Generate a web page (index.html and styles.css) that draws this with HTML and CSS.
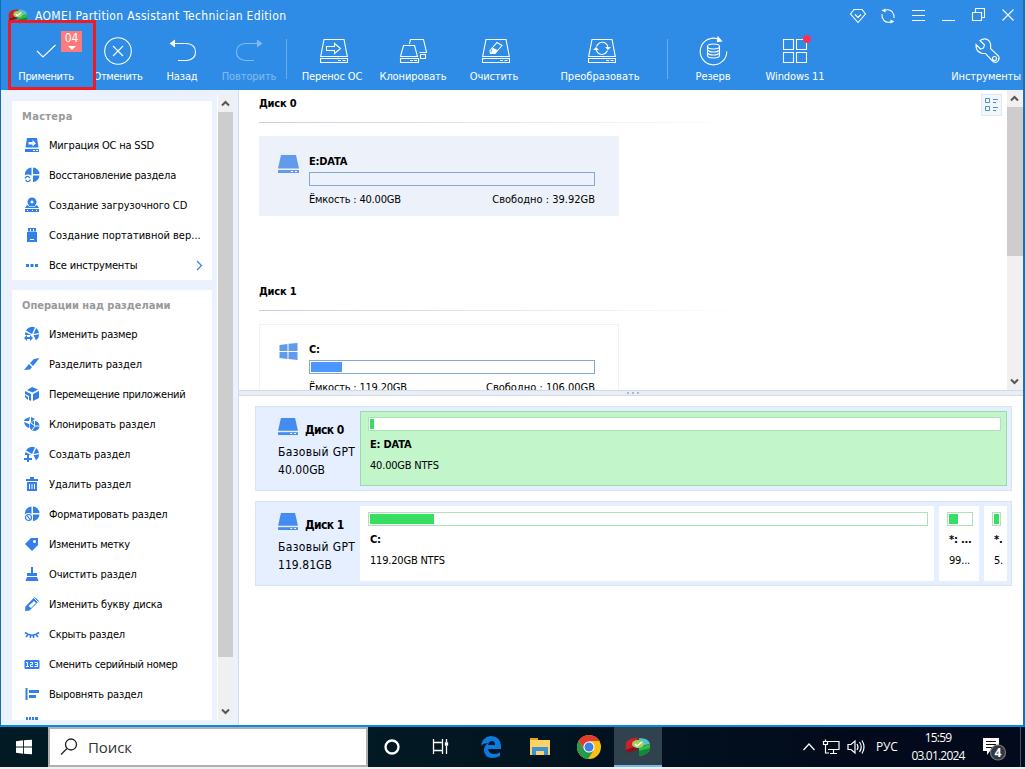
FILE: index.html
```html
<!DOCTYPE html>
<html lang="ru">
<head>
<meta charset="utf-8">
<title>AOMEI Partition Assistant</title>
<link rel="stylesheet" href="styles.css">
</head>
<body>
<svg class="defs" width="0" height="0">
  <defs>
    <symbol id="disk" viewBox="0 0 21 18"><path d="M3 0h15l3 13.500H0z"/><path d="M0 15h21v3H0z"/><path d="M13 16h2v1h-2zM17 16h2v1h-2z" fill="#fff"/></symbol>
    <symbol id="drive" viewBox="0 0 28 25" fill="none" stroke="#fff"><path d="M4 .5h20L27.300 17.500H.7z"/><path d="M.5 19.500h27v4H.5z"/><path d="M18 21.500h3M22.500 21.500h3"/></symbol>
    <symbol id="pie" viewBox="0 0 16 16"><path d="M9 .5a7 7 0 0 1 6.500 6.500H9z"/><path d="M7.500.5V8.500H1a7 7 0 0 1 6.500-8zM9 8.500h6.500a7 7 0 0 1-6.500 6.500z"/></symbol>
    <symbol id="slice" viewBox="0 0 16 16"><path d="M8 8 2 4.500A7 7 0 0 1 11 1.500zM12.200 2A7 7 0 0 1 15 7L9.500 8zM9.500 9.200l5.500-1a7 7 0 0 1-3 6zM1.300 6 7 9H1z"/></symbol>
    <symbol id="logo" viewBox="0 0 26 20"><path d="M2 4Q7 0 13 1l-1 8-11 4Q0 7 2 4z" fill="#ce2029"/><path d="M1 13l11-4v4l-10 3z" fill="#8c1119"/><path d="M14 1q10 0 11 6l-10 2z" fill="#54bfd0"/><path d="M14 10l11-3v6q-3 5-11 6z" fill="#30bb43"/><path d="M14 14l11-3v2q-3 5-11 6z" fill="#148737"/><ellipse cx="13" cy="7" rx="6" ry="4" fill="#9bd45b"/><path d="M10 7l2 2 5-4" fill="none" stroke="#fff" stroke-width="1.500"/></symbol>
    <symbol id="win" viewBox="0 0 18 17"><path d="M0 2l8-1v7H0zM9 .8 18 0v8H9zM0 9h8v7l-8-1zM9 9h9v8l-9-1z"/></symbol>
  </defs>
</svg>
<div class="desktop">
<div class="window">
  <header class="header">
    <div class="titlebar">
      <svg class="app-logo" width="20" height="17"><use href="#logo"/></svg>
      <span class="app-title">AOMEI Partition Assistant Technician Edition</span>
      <div class="win-controls">
        <svg width="16" height="16" viewBox="0 0 16 16"><path d="M4 1.500h8L15.500 6 8 14.500.5 6zM5 6.500l3 3 3-3"/></svg>
        <svg width="16" height="16" viewBox="0 0 16 16"><path d="M4 2.500q5-2 8 1 2.500 3 2 6.500M12 13.500q-5 2-8-1-2.500-3-2-6.500"/><path d="M1.500 2.500l4-2v4zM14.500 13.500l-4 2v-4z" fill="#fff" stroke="none"/></svg>
        <svg width="16" height="16" viewBox="0 0 16 16"><path d="M2 2.500h13M2 7.500h13M2 12.500h13"/></svg>
        <svg width="16" height="16" viewBox="0 0 16 16"><path d="M2 12.500h13"/></svg>
        <svg width="16" height="16" viewBox="0 0 16 16"><path d="M2.500 4.500h9v8h-9zM5.500 4V.5h9v9H12"/></svg>
        <svg width="16" height="16" viewBox="0 0 16 16"><path d="M2.500 1.500l11 11M13.500 1.500l-11 11"/></svg>
      </div>
    </div>
    <nav class="toolbar">
      <div class="tool apply"><svg width="24" height="30" viewBox="0 0 24 30"><path d="M3 15l6 6L21.500 9"/></svg><span>Применить</span>
        <div class="count"><b>04</b><svg width="8" height="4"><path d="M0 0h8L4 4z" fill="#fff" stroke="none"/></svg></div><div class="frame"></div></div>
      <div class="tool cancel"><svg width="28" height="30" viewBox="0 0 28 30"><circle cx="14" cy="15" r="13.300"/><path d="M9 10l10 10M19 10L9 20"/></svg><span>Отменить</span></div>
      <div class="tool undo"><svg width="28" height="30" viewBox="0 0 28 30"><path d="M5 7.500h14q8.500 1 8.500 8.500t-8.500 8.500h-9"/><path d="M2.500 7.500l4-3v6z" fill="#fff"/></svg><span>Назад</span></div>
      <div class="tool redo"><svg width="28" height="30" viewBox="0 0 28 30"><path d="M23 7.500H10Q1.500 8.500 1.500 16t8.500 8.500h9"/><path d="M26.500 7.500l-4-3v6z" fill="#fff"/></svg><span>Повторить</span></div>
      <div class="sep"></div>
      <div class="tool move"><svg width="28" height="30" viewBox="0 0 28 30"><use href="#drive" y="3" width="28" height="25"/><path d="M6.500 10.500h8v-3l6 5-6 5v-3h-8z"/></svg><span>Перенос ОС</span></div>
      <div class="tool clone"><svg width="28" height="30" viewBox="0 0 28 30"><path d="M4.500 9.500h11l3 11H1.500zM1.500 22.500h18v4h-18zM11 24.500h3M15 24.500h3M10.500 8l1-4.500h13l3 13h-7M21.500 18.500h5v4h-5z"/></svg><span>Клонировать</span></div>
      <div class="tool wipe"><svg width="28" height="30" viewBox="0 0 28 30"><use href="#drive" y="3" width="28" height="25"/><path d="M8 14.500l7-8 5 3-7 8H8.500z"/><path d="M11 12.500l4 2-2.500 3H9.500z" fill="#fff"/></svg><span>Очистить</span></div>
      <div class="tool convert"><svg width="28" height="30" viewBox="0 0 28 30"><use href="#drive" y="3" width="28" height="25"/><path d="M8.500 10.500q2-4.500 6.500-4.200 4 .5 5 5.200M19.500 14.500q-2 4-6 4-4-.5-5.500-5"/><path d="M17 11h6l-3 3zM5 14h6l-3-3z" fill="#fff" stroke="none"/></svg><span>Преобразовать</span></div>
      <div class="sep sep2"></div>
      <div class="tool backup"><svg width="30" height="30" viewBox="0 0 30 30"><path d="M20 3A13.300 13.300 0 1 0 28.800 15.500"/><path d="M20 1l3.500 4-4 .5z" fill="#fff"/><ellipse cx="15.500" cy="10.500" rx="6" ry="2.500"/><path d="M9.500 10.500v9q0 2.500 6 2.500t6-2.500v-9M9.500 13.500q1 2.500 6 2.500t6-2.500M9.500 16.500q1 2.500 6 2.500t6-2.500"/></svg><span>Резерв</span></div>
      <div class="tool win11"><svg width="30" height="30" viewBox="0 4 30 30"><path d="M3.500 7.500h10v10h-10zM16.500 7.500h10v10h-10zM3.500 20.500h10v10h-10zM16.500 20.500h10v10h-10z"/><circle cx="27" cy="7" r="4" fill="#ff2d5a" stroke="none"/></svg><span>Windows 11</span></div>
      <div class="tool tools"><svg width="28" height="30" viewBox="0 0 28 30"><path d="M8 4.500l4.500 4.500-1 3-3 1-4.500-4.500q-.5 7.500 6.500 9h3l7.500 8q3 2 5-.5t.5-5l-8-7.500q1-6-2.500-8.500T8 4.500z"/><circle cx="22.500" cy="22.500" r="2"/></svg><span>Инструменты</span></div>
    </nav>
  </header>
  <div class="body">
    <aside class="side">
      <div class="cards">
        <section class="card first">
          <h2>Мастера</h2>
          <div class="item"><svg viewBox="0 0 16 16"><path d="M3 1h10l1.500 9.500h-13zM1 12h14v3H1z"/><path d="M4.500 5h4V3l3.500 3.200L8.500 9.500v-2h-4zM9 13h2v1H9zM12 13h2v1h-2z" fill="#fff"/></svg>Миграция ОС на SSD</div>
          <div class="item"><svg viewBox="0 0 16 16"><use href="#pie"/><circle cx="4" cy="12" r="4.500" fill="#fff"/><path d="M1 11.500q1-2.500 3.500-2L6 11M6.500 12.500q-1 2.500-3.500 2L1.500 13" class="line"/></svg>Восстановление раздела</div>
          <div class="item spaced"><svg viewBox="0 0 16 16"><circle cx="8" cy="5" r="4.500"/><circle cx="8" cy="5" r="1.500" fill="#fff"/><path d="M3 8l3 2h4l3-2 2 3H1zM1 12h14v3H1z"/><path d="M3 13h1v1H3zM8 13h1v1H8zM12 13h1v1h-1z" fill="#fff"/></svg>Создание загрузочного CD</div>
          <div class="item wider"><svg viewBox="0 0 16 16"><path d="M4 1h8v4H4zM3 5h10v10H3z"/><path d="M6 2h1v2H6zM9 2h1v2H9zM6 12h4v1H6zM4 4.500h8v.5H4z" fill="#fff"/></svg>Создание портативной вер...</div>
          <div class="item"><svg viewBox="0 0 16 16"><path d="M2 7h3v3H2zM6.500 7h3v3h-3zM11 7h3v3h-3z"/></svg>Все инструменты<svg class="chev" viewBox="0 0 16 16"><path d="M6 4l4.500 4.500L6 13" class="line"/></svg></div>
        </section>
        <section class="card">
          <h2>Операции над разделами</h2>
          <div class="item"><svg viewBox="0 0 16 16"><use href="#slice"/><path d="M0 9h9v6H0z" fill="#fff"/><path d="M0 12l3-3v2h3V9l3 3-3 3v-2H3v2z"/></svg>Изменить размер</div>
          <div class="item spaced"><svg viewBox="0 0 16 16"><path d="M15.500 2L9 10 6 7l4-4zM5 8l3 3-2 2.500-6 .5z"/></svg>Разделить раздел</div>
          <div class="item tight"><svg viewBox="0 0 16 16"><path d="M8 1l6 2.500-5.500 3L3 4zM9 8l6-3v7l-6 3zM1 5l6 3v7l-2-1V10L1 8z"/><path d="M1 9l3 2v3l-3-3z"/></svg>Перемещение приложений</div>
          <div class="item spaced"><svg viewBox="0 0 16 16"><path d="M1 3l5-2-1 4H0zM7 1l4 2-4 3zM0 6l5 2v4q-4-1-5-6z"/><circle cx="10.500" cy="10" r="5"/><path d="M10.500 5v5h5M7 7l4 3-3 4" fill="none" stroke="#fff"/></svg>Клонировать раздел</div>
          <div class="item spaced"><svg viewBox="0 0 16 16"><use href="#slice"/><path d="M0 9h7v7H0z" fill="#fff"/><path d="M3 9h2v3h3v2H5v2H3v-2H0v-2h3z"/></svg>Создать раздел</div>
          <div class="item spaced"><svg viewBox="0 0 16 16"><path d="M2 3h4V1h4v2h4v2H2zM3 6h10v9H3z"/><path d="M5 8h1v5H5zM7.500 8h1v5h-1zM10 8h1v5h-1z" fill="#fff"/></svg>Удалить раздел</div>
          <div class="item"><svg viewBox="0 0 16 16"><use href="#pie"/><circle cx="4.500" cy="11.500" r="4.500" fill="#fff"/><circle cx="4.500" cy="11.500" r="3" class="line"/><path d="M3 9.500l3 4" class="line"/></svg>Форматировать раздел</div>
          <div class="item tight"><svg viewBox="0 0 16 16"><path d="M7 2l7 0v7l-6 6L1 8z"/><circle cx="10.500" cy="5.500" r="1.500" fill="#fff"/></svg>Изменить метку</div>
          <div class="item spaced"><svg viewBox="0 0 16 16"><path d="M7 1h2v6h4v3H3V7h4zM3 11h10l1.500 4h-13z"/></svg>Очистить раздел</div>
          <div class="item"><svg viewBox="0 0 16 16"><path d="M10.500 1L15 5 5.500 14.500 1 15l.5-4.500z"/><path d="M10 5l2 2-5 5-2.500-2z" fill="#fff"/><path d="M9.500 1.500l5 5" stroke="#fff"/></svg>Изменить букву диска</div>
          <div class="item"><svg viewBox="0 0 16 16"><path d="M1 6.500q7 5.500 14 0M4 8.500l-2 2.500M12 8.500l2 2.500M6.500 9.500V12M9.500 9.500V12" class="line thick"/></svg>Скрыть раздел</div>
          <div class="item tight"><svg viewBox="0 0 16 16"><rect x=".5" y="4" width="15" height="9" rx="1"/><path d="M2 6.500h1.500v4M2 10.500h3M6 6.500h2.500v2h-2v2h2.500M10.500 6.500h3v4h-3M11 8.500h2" fill="none" stroke="#fff"/></svg>Сменить серийный номер</div>
          <div class="item"><svg viewBox="0 0 16 16"><path d="M1.500 2h2v12h-2zM5 4h10v3H5zM5 9h7v3H5z"/></svg>Выровнять раздел</div>
          <div class="item"><svg viewBox="0 0 16 16"><path d="M2 1h2v5H2zM5 1h2v5H5zM8 1h2v5H8zM11 1h3v5h-3z"/></svg>Информация</div>
        </section>
      </div>
      <div class="scroll side-scroll">
        <svg viewBox="0 0 15 17"><path d="M4 10.500l3.500-3.500 3.500 3.500"/></svg>
        <div class="thumb"></div>
        <svg class="down" viewBox="0 0 15 17"><path d="M4 6.500l3.500 3.500L11 6.500"/></svg>
      </div>
    </aside>
    <main class="main">
      <div class="overview">
        <div class="groups">
          <section class="group"><h3>Диск 0</h3><hr>
            <div class="vol selected"><svg class="vol-icon" width="21" height="18"><use href="#disk"/></svg>
              <div class="vol-info"><h4>E:DATA</h4><div class="bar"></div><p><span>Ёмкость : 40.00GB</span><span class="free">Свободно : 39.92GB</span></p></div></div>
          </section>
          <section class="group"><h3>Диск 1</h3><hr>
            <div class="vol"><svg class="vol-icon" width="21" height="17"><use href="#win"/></svg>
              <div class="vol-info"><h4>C:</h4><div class="bar"><i style="width:31px"></i></div><p><span>Ёмкость : 119.20GB</span><span class="free">Свободно : 106.00GB</span></p></div></div>
          </section>
        </div>
        <div class="view-switch"><svg width="13" height="14" viewBox="0 0 13 14"><path d="M.5.5h4v4h-4zM.5 8.500h4v4h-4zM8 1.500h5M8 4.500h3M8 9.500h5M8 12.500h3"/></svg></div>
        <div class="scroll main-scroll">
          <svg viewBox="0 0 15 17"><path d="M4 10.500l3.500-3.500 3.500 3.500"/></svg>
          <div class="thumb"></div>
          <svg class="down" viewBox="0 0 15 17"><path d="M4 6.500l3.500 3.500L11 6.500"/></svg>
        </div>
      </div>
      <div class="splitter"><i></i><i></i><i></i></div>
      <div class="map">
        <section class="disk">
          <div class="disk-info"><div class="disk-name"><svg width="20" height="17"><use href="#disk"/></svg><b>Диск 0</b></div><span class="scheme">Базовый GPT</span><span>40.00GB</span></div>
          <div class="part wide active"><div class="meter"><i style="width:4px"></i></div><b>E: DATA</b><span>40.00GB NTFS</span></div>
        </section>
        <section class="disk">
          <div class="disk-info"><div class="disk-name"><svg width="20" height="17"><use href="#disk"/></svg><b>Диск 1</b></div><span class="scheme">Базовый GPT</span><span>119.81GB</span></div>
          <div class="part wide"><div class="meter"><i style="width:64px"></i></div><b>C:</b><span>119.20GB NTFS</span></div>
          <div class="part efi"><div class="meter"><i style="width:9px"></i></div><b>*: ...</b><span>99...</span></div>
          <div class="part rec"><div class="meter"><i style="width:5px"></i></div><b>*.</b><span>5.</span></div>
        </section>
      </div>
    </main>
  </div>
</div>
<footer class="taskbar">
  <div class="start"><svg width="16" height="16" viewBox="0 0 18 17" fill="#fff"><use href="#win"/></svg></div>
  <div class="search"><svg width="18" height="18" viewBox="0 0 18 18"><circle cx="11" cy="6.500" r="5.500"/><path d="M7 10.500L1 16.500"/></svg>Поиск</div>
  <div class="task"><svg width="18" height="18" viewBox="0 0 18 18"><circle cx="9" cy="9" r="6.500" fill="none" stroke="#fff" stroke-width="2.300"/></svg></div>
  <div class="task"><svg width="18" height="18" viewBox="0 0 18 18" fill="none" stroke="#fff" stroke-width="1.300"><path d="M2 4.500h10M2.500 4.500v8h9v-8M2 12.500h10M2.500 1v4M11.500 1v4M2.500 12v4M11.500 12v4M15.500 1v3M15.500 8v8"/><path d="M14.500 5h2v2h-2z" fill="#fff"/></svg></div>
  <div class="task edge"><svg width="22" height="22" viewBox="0 0 22 22"><path d="M1 10Q2 1 11 0q9 0 10 10v3H8q1 5 6 5 3 0 6-1.500V20q-4 2-8 2-8-1-8-8 0-4 4-7-5 0-7 3zm7-1h7q0-4-3-4T8 9z" fill="#0a7ce0"/></svg></div>
  <div class="task files"><svg width="22" height="18" viewBox="0 0 22 18"><path d="M1 0h8v3H1z" fill="#e8a80c"/><path d="M1 2h20v15H1z" fill="#fed364"/><path d="M3 9h16v8h-4v-4H7v4H3z" fill="#3a91d8"/><path d="M7 13h8v4H7z" fill="#fed364"/></svg></div>
  <div class="task chrome"><svg width="24" height="24" viewBox="0 0 24 24"><circle cx="12" cy="12" r="12" fill="#fbc116"/><path d="M1.600 6A12 12 0 0 1 22.400 6H12L7 14z" fill="#e33b2e"/><path d="M1.600 6A12 12 0 0 0 11 24l5.500-8.500L7 14z" fill="#249a4c"/><circle cx="12" cy="12" r="5.600" fill="#fff"/><circle cx="12" cy="12" r="4.500" fill="#3f7ee8"/></svg></div>
  <div class="task current"><svg width="26" height="20"><use href="#logo"/></svg></div>
  <div class="tray">
    <svg width="14" height="10" viewBox="0 0 14 10"><path d="M1.500 8L7 2l5.500 6"/></svg>
    <svg width="17" height="16" viewBox="0 0 17 16"><path d="M5 2.500h11v8H5M10.500 11v3M7 14.500h7M.5 2.500h4v3h-4zM2.500 6v8H6M2.500.5v2"/></svg>
    <svg width="18" height="16" viewBox="0 0 18 16"><path d="M1 5.500h3l4-3.500v12L4 10.500H1zM10 5q2 3 0 6M12.500 3q3.500 5 0 10M15 1.500q4 6.500 0 13"/></svg>
    <span class="lang">РУС</span>
    <div class="clock"><span>15:59</span><span>03.01.2024</span></div>
    <svg class="notes" width="26" height="26" viewBox="0 0 26 26"><path d="M2 3h16v13H9l-3 4v-4H2z" fill="#fff" stroke="none"/><path d="M5 6.500h10M5 9.500h10M5 12.500h6" stroke="#111"/><circle cx="17" cy="17.500" r="7.500" fill="#303844" stroke="#777"/><text x="13.500" y="22">4</text></svg>
  </div>
</footer>
</div>
</body>
</html>
```
FILE: styles.css
```css
* { box-sizing: border-box; }
body { margin: 0; overflow: hidden; font: 11px/14px "DejaVu Sans Condensed", "DejaVu Sans", "Noto Sans", sans-serif; letter-spacing: -.2px; color: #000; }
h2, h3, h4, p { margin: 0; font-size: 11px; }
svg { display: block; flex: none; overflow: visible; }
.defs { position: absolute; }
.desktop { width: 1025px; height: 769px; display: flex; flex-direction: column; background: #f0f0f0; white-space: nowrap; }
.window { height: 727px; display: flex; flex-direction: column; font-stretch: condensed; border-left: 1px solid #0c6db8; border-right: 2px solid #286da0; border-bottom: 2px solid #078bda; background: #fff; }

.header { height: 90px; background: #2e8ce6; color: #fff; }
.titlebar { height: 30px; display: flex; align-items: center; padding: 2px 7px 0 7px; }
.app-title { margin-left: 7px; font-size: 12px; letter-spacing: .34px; }
.win-controls { margin-left: auto; display: flex; gap: 14px; }
.win-controls svg, .tool svg { fill: none; stroke: #fff; stroke-width: 1.100; }
.toolbar { height: 60px; display: flex; padding-left: 7px; }
.tool { position: relative; height: 60px; padding: 6px 0; display: flex; flex-direction: column; align-items: center; justify-content: space-between; letter-spacing: -.1px; }
.tool svg { height: 30px; }
.apply { width: 76px; letter-spacing: -.3px; }
.cancel { width: 68px; letter-spacing: -.3px; }
.undo { width: 60px; }
.redo { width: 74px; }
.redo svg, .redo span { opacity: .4; }
.move, .wipe, .backup { width: 90px; }
.clone { width: 72px; }
.convert { width: 122px; letter-spacing: 0; }
.move svg, .wipe svg, .convert svg { margin-left: 3px; }
.win11 { width: 74px; }
.tools { margin-left: auto; margin-right: 2px; }
.sep { width: 1px; height: 40px; margin-top: 9px; background: #69adf0; }
.sep2 { margin-left: 6px; }
.count { position: absolute; left: 53px; top: 1px; width: 21px; height: 21px; background: #ff7b7b; display: flex; flex-direction: column; align-items: center; }
.count b { font-weight: normal; font-size: 12px; line-height: 15px; letter-spacing: 0; }
.count svg { height: 4px; }
.frame { position: absolute; left: 0; top: -10px; width: 88px; height: 70px; border: 3px solid #ed1c24; z-index: 2; }

.body { flex: 1; min-height: 0; display: flex; }
.side { width: 238px; padding: 5px 5px 5px 11px; display: flex; justify-content: space-between; background: #ebf2fe; border-right: 1px solid #d2dbea; }
.cards { width: 200px; overflow: hidden; padding-top: 6px; display: flex; flex-direction: column; gap: 10px; }
.card { flex: none; background: #fff; padding-top: 9px; height: 460px; }
.card.first { height: 179px; }
.card h2 { height: 21px; padding-left: 10px; line-height: 14px; color: #999; letter-spacing: 0; }
.card.first h2 { letter-spacing: .3px; }
.item { height: 30px; display: flex; align-items: center; padding-left: 12px; gap: 9px; }
.item.spaced { letter-spacing: -.1px; }
.item.wider { letter-spacing: 0; }
.item.tight { letter-spacing: -.3px; }
.item > svg { width: 16px; height: 16px; margin-top: -2px; fill: #317fe9; }
.item .line { fill: none; stroke: #317fe9; stroke-width: 1.200; }
.item .thick { stroke-width: 1.700; }
.item .chev { margin-left: auto; margin-right: 5px; }
.scroll { width: 16px; background: #f0f0f0; display: flex; flex-direction: column; border-left: 1px solid #fff; }
.scroll svg { width: 15px; height: 17px; fill: none; stroke: #555; stroke-width: 2; }
.main-scroll { border: 0; }
.scroll .down { margin-top: auto; }
.thumb { background: #cdcdcd; }
.side-scroll .thumb { height: 545px; }
.main-scroll .thumb { height: 149px; }

.main { flex: 1; display: flex; flex-direction: column; min-width: 0; }
.overview { height: 300px; display: flex; overflow: hidden; padding-left: 20px; }
.groups { width: 722px; height: 300px; overflow: hidden; }
.group { height: 188px; padding-top: 7px; }
.group hr { height: 1px; margin: 11px 0 13px; width: 490px; border: 0; background: linear-gradient(90deg, #c9cfe1, #fff); }
.vol { width: 360px; height: 80px; border: 1px solid #f2f2f5; display: flex; padding: 18px 23px 0 18px; }
.vol.selected { background: #edf2fa; border-color: #edf2fa; }
.vol-icon { fill: #629aec; }
.vol-info { width: 286px; margin-left: 10px; }
.bar { height: 14px; margin: 3px 0 7px; border: 1px solid #82a7d9; padding: 1px; display: flex; }
.bar i { background: #4b96ff; }
.vol p { display: flex; justify-content: space-between; font-weight: normal; }
.free { letter-spacing: 0; }
.vol h4 { line-height: 14px; }
.view-switch { width: 21px; height: 22px; margin: 4px 5px 0 0; display: grid; place-items: center; border: 1px solid #dfe7f2; background: #f3f7fc; }
.view-switch svg { fill: none; stroke: #4a8ae4; }
.splitter { height: 6px; display: flex; justify-content: center; align-items: center; gap: 3px; padding-left: 3px; background: #e9eef6; border: solid #d3dbe7; border-width: 1px 0; }
.splitter i { width: 2px; height: 2px; background: #aab8d0; }
.map { padding: 10px 11px 0 16px; display: flex; flex-direction: column; gap: 10px; }
.disk { height: 85px; display: flex; gap: 5px; padding: 4px; background: #e5efff; border: 1px solid #d8e4f5; }
.disk-info { width: 95px; padding: 7px 0 0 18px; font-size: 12px; line-height: 18px; letter-spacing: .05px; display: flex; flex-direction: column; }
.disk-name { height: 25px; display: flex; gap: 7px; fill: #458cf0; }
.disk-name b { font-size: 12px; padding-top: 3px; letter-spacing: -.6px; }
.scheme { letter-spacing: .37px; }
.part { background: #fff; padding: 6px 5px 0 8px; display: flex; flex-direction: column; overflow: hidden; border: 0 solid #9adbaa; }
.part.wide { flex: 1; padding-right: 6px; }
.part.active { background: #c3f5cb; border-width: 1px; padding: 5px 5px 0 7px; }
.efi { width: 40px; }
.rec { width: 23px; }
.meter { height: 14px; flex: none; padding: 1px; border: 1px solid #aee2b8; background: #fff; display: flex; }
.meter i { background: #38de62; }
.part.efi, .part.rec { padding-right: 6px; }
.part b { margin: 7px 0 7px 2px; line-height: 14px; }
.part span { margin-left: 2px; }

.taskbar { height: 40px; display: flex; background: linear-gradient(90deg, #021a23 35%, #020a1c 85%); color: #fff; font-family: "Open Sans", "Noto Sans", sans-serif; }
.start { width: 48px; display: grid; place-items: center; }
.search { width: 320px; border: 2px solid #b0b0b0; background: #fff; color: #333; font-size: 15px; letter-spacing: -.1px; display: flex; align-items: center; gap: 10px; padding-left: 10px; }
.search svg { fill: none; stroke: #222; stroke-width: 1.300; }
.task { width: 48px; display: grid; place-items: center; }
.task.edge { width: 53px; }
.task.files { width: 46px; }
.task.chrome { width: 51px; }
.task.current { width: 48px; background: #30424d; border-bottom: 2px solid #76b9ed; padding-top: 2px; }
.tray { flex: 1; display: flex; align-items: center; padding-left: 140px; font-size: 12px; border-right: 1px solid #46546a; margin-right: 4px; }
.tray svg { fill: none; stroke: #fff; stroke-width: 1.200; margin-right: 7px; }
.lang { width: 22px; margin-left: 4px; letter-spacing: -.2px; }
.clock { width: 62px; margin-left: 9px; display: flex; flex-direction: column; align-items: center; line-height: 18px; letter-spacing: -.8px; }
.tray .notes { margin: 2px 0 0 12px; }
.notes text { fill: #fff; stroke: none; font-size: 12px; font-weight: bold; }
```
